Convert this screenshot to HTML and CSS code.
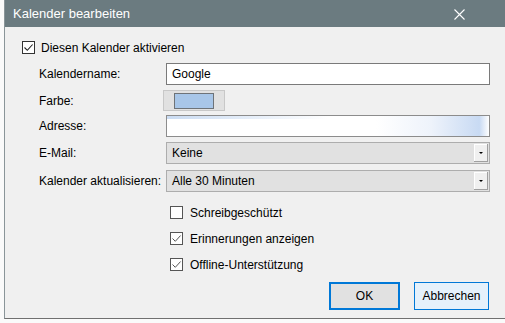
FILE: index.html
```html
<!DOCTYPE html>
<html lang="de">
<head>
  <meta charset="UTF-8" />
  <title>Kalender bearbeiten</title>
  <link rel="stylesheet" href="styles.css">
</head>
<body>
  <div class="window">
    <!-- Titelleiste -->
    <div class="titlebar">
      <span class="title">Kalender bearbeiten</span>
      <span class="close">
        <svg width="11" height="11" viewBox="0 0 11 11"><path d="M0.5 0.5 L10.5 10.5 M10.5 0.5 L0.5 10.5" stroke="#fff" stroke-width="1.1" fill="none"/></svg>
      </span>
    </div>

    <div class="content">
      <label class="check main-check">
        <span class="box checked"><svg width="11" height="11" viewBox="0 0 11 11"><path d="M1.5 5.5 L4.3 8.3 L9.6 2.5" stroke="#222" stroke-width="1.1" fill="none"/></svg></span>
        Diesen Kalender aktivieren
      </label>

      <div class="form">
        <div class="row row-name">
          <span class="label">Kalendername:</span>
          <div class="field input">Google</div>
        </div>
        <div class="row row-color">
          <span class="label">Farbe:</span>
          <div class="color-btn"><span class="swatch"></span></div>
        </div>
        <div class="row row-address">
          <span class="label">Adresse:</span>
          <div class="field input address"></div>
        </div>
        <div class="row row-mail">
          <span class="label">E-Mail:</span>
          <div class="field select">Keine<span class="drop"><span class="arrow"></span></span></div>
        </div>
        <div class="row row-refresh">
          <span class="label">Kalender aktualisieren:</span>
          <div class="field select">Alle 30 Minuten<span class="drop"><span class="arrow"></span></span></div>
        </div>

        <div class="options">
          <label class="check">
            <span class="box"></span>
            Schreibgeschützt
          </label>
          <label class="check">
            <span class="box checked"><svg width="11" height="11" viewBox="0 0 11 11"><path d="M1.5 5.5 L4.3 8.3 L9.6 2.5" stroke="#555" stroke-width="1" fill="none"/></svg></span>
            Erinnerungen anzeigen
          </label>
          <label class="check">
            <span class="box checked"><svg width="11" height="11" viewBox="0 0 11 11"><path d="M1.5 5.5 L4.3 8.3 L9.6 2.5" stroke="#555" stroke-width="1" fill="none"/></svg></span>
            Offline-Unterstützung
          </label>
        </div>
      </div>

      <div class="buttons">
        <button class="btn default">OK</button>
        <button class="btn focus">Abbrechen</button>
      </div>
    </div>
  </div>
</body>
</html>
```

FILE: styles.css
```css
body {
  margin: 0;
  background: #fafafa;
  font-family: 'Segoe UI', 'Liberation Sans', sans-serif;
  font-size: 12px;
  color: #000;
}

.window {
  margin-left: 4px;
  height: 318px;
  background: #f0f0f0;
  border-left: 1px solid #8a9599;
  border-bottom: 1px solid #707070;
}

.titlebar {
  height: 27px;
  background: #6b7b80;
  color: #fff;
  display: flex;
  align-items: center;
  justify-content: space-between;
  padding-left: 8px;
}

.title {
  font-size: 13px;
}

.close {
  display: flex;
  margin-right: 40px;
  margin-top: 1px;
}

.content {
  padding: 14px 0 0 17px;
}

.check {
  display: flex;
  align-items: center;
  gap: 6px;
  height: 13px;
}

.box {
  width: 11px;
  height: 11px;
  border: 1px solid #333;
  background: #fff;
  display: flex;
}

.options .box {
  border-color: #555;
}

.form {
  margin-left: 17px;
  margin-top: 9px;
}

.row {
  display: flex;
  align-items: center;
  height: 22px;
}

.label {
  width: 127px;
  flex: none;
}

.row-color {
  margin-top: 5px;
  height: 21px;
}

.row-address {
  margin-top: 4px;
}

.row-mail {
  margin-top: 5px;
}

.row-refresh {
  margin-top: 6px;
}

.field {
  box-sizing: border-box;
  width: 324px;
  height: 22px;
  display: flex;
  align-items: center;
  padding-left: 5px;
}

.input {
  background: #fff;
  border: 1px solid #7a7a7a;
}

.address {
  border-color: #8c8c8c;
  background:
    linear-gradient(to right, rgba(150, 185, 230, 0.5), rgba(255, 255, 255, 0) 50%) top / 100% 3px no-repeat,
    linear-gradient(to right, #fff 65%, #eef3fb 82%, #c8daf3 97%, #fff);
}

.color-btn {
  box-sizing: border-box;
  margin-left: -3px;
  width: 62px;
  height: 21px;
  background: #e1e1e1;
  border: 1px solid #c8c8c8;
  display: flex;
  align-items: center;
  justify-content: center;
}

.swatch {
  width: 38px;
  height: 14px;
  background: #a8c6e8;
  border: 1px solid #6e7378;
}

.select {
  background: #e1e1e1;
  border: 1px solid #adadad;
  justify-content: space-between;
  padding-right: 1px;
}

.drop {
  box-sizing: border-box;
  width: 14px;
  height: 18px;
  background: #f0f0f0;
  border-right: 1px solid #a0a0a0;
  border-bottom: 1px solid #a0a0a0;
  box-shadow: inset 1px 1px 0 #fff;
  display: flex;
  align-items: center;
  justify-content: center;
}

.arrow {
  width: 0;
  height: 0;
  border-left: 2px solid transparent;
  border-right: 2px solid transparent;
  border-top: 2px solid #000;
}

.options {
  margin-left: 131px;
  margin-top: 14px;
  display: flex;
  flex-direction: column;
  gap: 13px;
}

.options .check {
  gap: 7px;
}

.buttons {
  display: flex;
  justify-content: flex-end;
  gap: 14px;
  margin-top: 11px;
  padding-right: 16px;
}

.btn {
  font-family: inherit;
  font-size: 12px;
  height: 28px;
  padding: 0;
}

.default {
  width: 71px;
  background: #e1e1e1;
  border: 2px solid #0078d7;
}

.focus {
  width: 75px;
  background: #e5f1fb;
  border: 1px solid #0078d7;
}
```
